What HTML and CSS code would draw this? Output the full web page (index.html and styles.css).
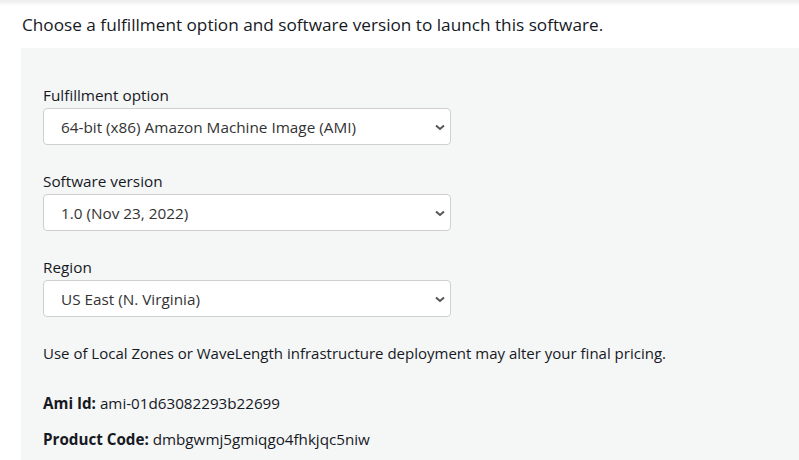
FILE: index.html
```html
<!DOCTYPE html>
<html>
<head>
<meta charset="utf-8">
<link rel="stylesheet" href="styles.css">
</head>
<body>
<div class="topshadow"></div>
<h1 class="title">Choose a fulfillment option and software version to launch this software.</h1>
<div class="panel">
  <div class="field">
    <div class="label">Fulfillment option</div>
    <div class="select"><span>64-bit (x86) Amazon Machine Image (AMI)</span>
      <svg class="chev" width="10" height="7" viewBox="0 0 10 7"><path d="M1 1.5 L5 5 L9 1.5" fill="none" stroke="#555" stroke-width="2"/></svg></div>
  </div>
  <div class="field">
    <div class="label">Software version</div>
    <div class="select"><span>1.0 (Nov 23, 2022)</span>
      <svg class="chev" width="10" height="7" viewBox="0 0 10 7"><path d="M1 1.5 L5 5 L9 1.5" fill="none" stroke="#555" stroke-width="2"/></svg></div>
  </div>
  <div class="field">
    <div class="label">Region</div>
    <div class="select"><span>US East (N. Virginia)</span>
      <svg class="chev" width="10" height="7" viewBox="0 0 10 7"><path d="M1 1.5 L5 5 L9 1.5" fill="none" stroke="#555" stroke-width="2"/></svg></div>
  </div>
  <p class="note">Use of Local Zones or WaveLength infrastructure deployment may alter your final pricing.</p>
  <p class="kv"><b>Ami Id:</b> ami-01d63082293b22699</p>
  <p class="kv kv2"><b>Product Code:</b> dmbgwmj5gmiqgo4fhkjqc5niw</p>
</div>
</body>
</html>
```
FILE: styles.css
```css
html, body { margin: 0; padding: 0; background: #fff; }
body { font-family: "Open Sans", "Noto Sans", sans-serif; color: #16191f; width: 799px; height: 460px; overflow: hidden; }
.topshadow { height: 6px; background: linear-gradient(#ececec, #fff); }
.title { margin: 8px 0 0 22px; font-size: 17.2px; font-weight: 400; line-height: 22px; color: #16191f; }
.panel { margin: 12px 0 0 21px; background: #f5f6f6; padding: 37px 0 0 22px; height: 375px; }
.field { margin-bottom: 26px; }
.label { font-size: 15.3px; line-height: 20px; margin-bottom: 3px; color: #16191f; }
.select { width: 384px; height: 35px; background: #fff; border: 1px solid #cfcfcf; border-radius: 4px; display: flex; align-items: center; justify-content: space-between; padding: 0 5px 0 17px; font-size: 15.3px; color: #333; }
.chev { margin-top: 1px; }
.note { font-size: 15px; margin: 1px 0 0 0; line-height: 20px; }
.kv { font-size: 15.2px; margin: 30px 0 0 0; line-height: 20px; }
.kv2 { margin-top: 16px; }
.kv b { font-weight: 700; }
```
